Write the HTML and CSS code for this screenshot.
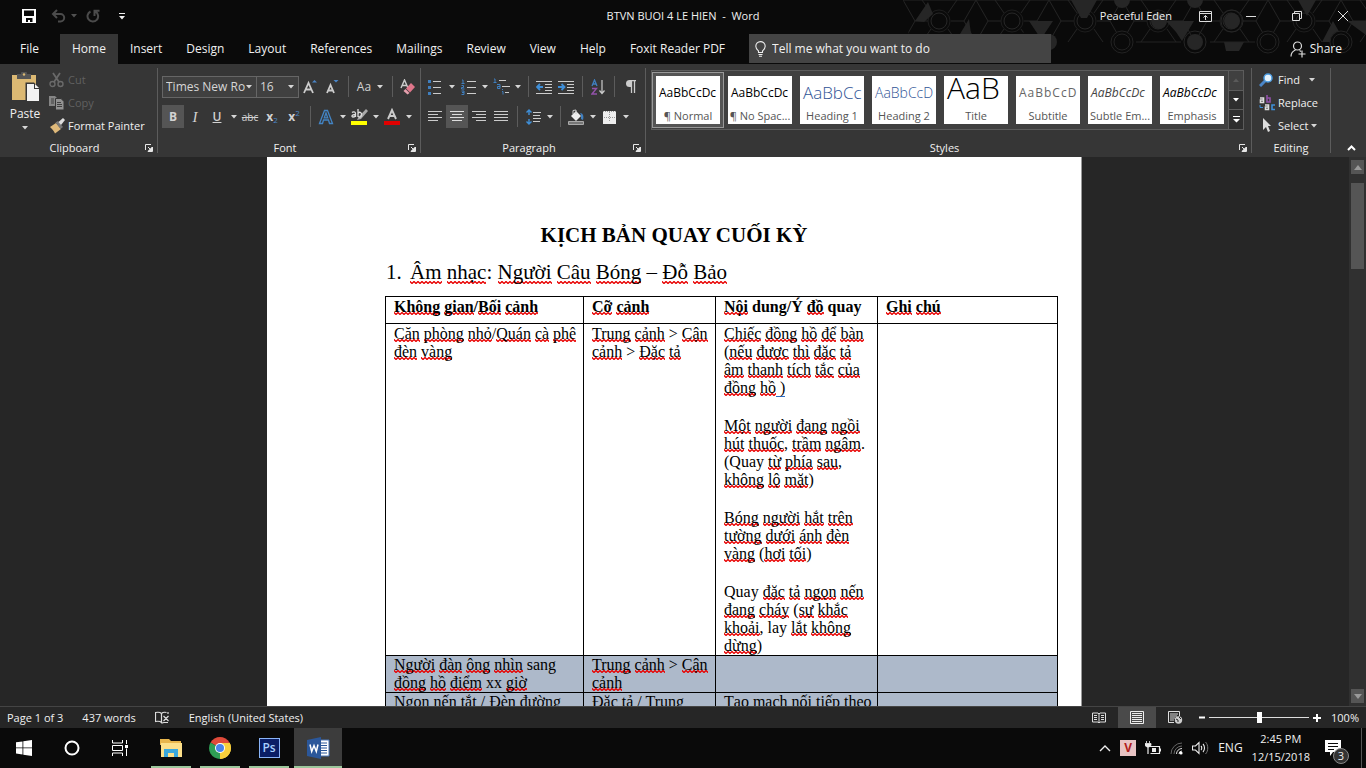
FILE: index.html
```html
<!DOCTYPE html>
<html lang="en">
<head>
<meta charset="utf-8">
<title>BTVN BUOI 4 LE HIEN - Word</title>
<link rel="stylesheet" href="styles.css">
</head>
<body>
<svg class="defs" aria-hidden="true">
  <symbol id="caret" viewBox="0 0 6 4"><path d="M0 0h6L3 3.500z" fill="#d6d6d6"/></symbol>
  <symbol id="launch" viewBox="0 0 8 8"><path d="M.5 6V.5H6M3 3l3 3M7.500 3v4.500H3z" fill="none" stroke="#e6e6e6"/><path d="M7 3v4H3z" fill="#e6e6e6"/></symbol>
</svg>

<header class="top">
  <svg class="pattern" width="466" height="64" viewBox="0 0 466 64" aria-hidden="true">
    <defs>
      <pattern id="hex" width="73" height="42" patternUnits="userSpaceOnUse" x="3" y="0">
        <path d="M0 0L12 21L0 42M12 21H25M48 21H61M61 21L73 0M61 21L73 42M28 13L19 0M45 13L54 0M28 29L19 42M45 29L54 42M0 0h73" fill="none" stroke="#232323"/>
        <circle cx="36" cy="21" r="8" fill="none" stroke="#262626"/>
        <circle cx="36" cy="21" r="11" fill="none" stroke="#1c1c1c"/>
      </pattern>
    </defs>
    <path d="M3 0H466V42H160L140 21L110 42H10z" fill="url(#hex)"/>
    <g fill="#262626">
      <path d="M15 21L28 2l5 12-9 8zM60 34l9-15 2 15zM129 21h24l-12 18zM171 0h26l-10 18h-6zM266 21h28l-12 20-6-9zM398 0h18l-9 16zM422 42l11-21 12 21zM324 42h20l-5 9h-13zM447 21h19v14z"/>
      <circle cx="332" cy="21" r="8"/><circle cx="295" cy="42" r="8"/><circle cx="149" cy="42" r="8"/><circle cx="222" cy="0" r="8"/><circle cx="295" cy="0" r="8"/><circle cx="259" cy="21" r="8"/>
    </g>
    <g fill="#0a0a0a" stroke="#232323"><circle cx="222" cy="42" r="11"/><circle cx="222" cy="42" r="8"/><circle cx="368" cy="42" r="11"/><circle cx="368" cy="42" r="8"/><circle cx="441" cy="42" r="11"/><circle cx="441" cy="42" r="8"/></g>
    <path d="M236 42h45M310 42h45" stroke="#232323"/>
    <circle cx="332" cy="21" r="11" fill="none" stroke="#262626"/><circle cx="295" cy="42" r="11" fill="none" stroke="#262626"/>
  </svg>
  <div class="titlebar">
    <div class="qat">
      <button aria-label="Save"><svg width="14" height="14" viewBox="0 0 14 14"><path d="M0 0h14v14H0z" fill="#fff"/><path d="M2 1.500h10v5.500H2zM4 9h6.500v4H8v-2H6v2H4z" fill="#0a0a0a"/></svg></button>
      <button aria-label="Undo"><svg width="15" height="14" viewBox="0 0 15 14"><path d="M2 5h7.500a3.700 3.700 0 010 7.400H7M6 1L2 5l4 4" fill="none" stroke="#4b4b4b" stroke-width="2"/></svg></button>
      <button class="slim" aria-label="Undo list"><svg width="6" height="4" opacity=".35"><use href="#caret"/></svg></button>
      <button aria-label="Repeat"><svg width="14" height="14" viewBox="0 0 14 14"><path d="M4.500 2.500A5.300 5.300 0 1 0 9.500 2.700M8.500 7V1.800H13.500" fill="none" stroke="#4b4b4b" stroke-width="2"/></svg></button>
      <button class="more" aria-label="Customize Quick Access Toolbar"><svg width="6" height="7" viewBox="0 0 6 7"><path d="M0 0h6v1H0zM0 3h6L3 6.500z" fill="#eee"/></svg></button>
    </div>
    <h1 class="doc-name">BTVN BUOI 4 LE HIEN&nbsp; -&nbsp; Word</h1>
    <div class="window-tools">
      <span class="user">Peaceful Eden</span>
      <button aria-label="Ribbon display options"><svg width="13" height="11" viewBox="0 0 13 11"><path d="M.5.500h12v10H.500zM.500 2.500h12M6.500 9V4.500M4.500 6.500l2-2 2 2" fill="none" stroke="#ddd"/></svg></button>
      <button aria-label="Minimize"><svg width="10" height="10"><path d="M0 5.500h10" stroke="#ddd"/></svg></button>
      <button aria-label="Restore"><svg width="10" height="10" viewBox="0 0 10 10"><path d="M.5 2.500h7v7h-7zM2.500 2.500v-2h7v7h-2" fill="none" stroke="#ddd"/></svg></button>
      <button aria-label="Close"><svg width="10" height="10"><path d="M0 0l10 10M10 0L0 10" stroke="#ddd"/></svg></button>
    </div>
  </div>
  <nav class="tabs">
    <button class="file">File</button>
    <button class="on">Home</button>
    <button>Insert</button>
    <button>Design</button>
    <button>Layout</button>
    <button>References</button>
    <button>Mailings</button>
    <button>Review</button>
    <button>View</button>
    <button>Help</button>
    <button>Foxit Reader PDF</button>
    <label class="tell">
      <svg width="11" height="16" viewBox="0 0 11 16"><path d="M3.500 11.500V10C2 8.500.8 7.500.8 5.300a4.700 4.700 0 019.400 0C10.200 7.500 9 8.500 7.500 10v1.500zM3.500 13.500h4M4 15.300h3" fill="none" stroke="#eee" stroke-width="1.100"/></svg>
      <input type="text" placeholder="Tell me what you want to do" aria-label="Tell me what you want to do">
    </label>
    <button class="share"><svg width="16" height="17" viewBox="0 0 16 17"><circle cx="7.500" cy="5" r="4" fill="none" stroke="#ddd" stroke-width="1.200"/><path d="M1 15.500c0-3.500 2-5.500 4.500-6.500M9.500 9.500l1.500 1M12 9.500v7M8.500 13h7" fill="none" stroke="#ddd" stroke-width="1.200"/></svg>Share</button>
  </nav>
</header>

<section class="ribbon">
  <div class="group clipboard">
    <div class="tools">
      <button class="paste">
        <svg width="29" height="30" viewBox="0 0 29 30"><path d="M1 3h24v25H1z" fill="#dcb973"/><path d="M6 2h4a3 3 0 016 0h4v5H6z" fill="#555"/><circle cx="13" cy="2.500" r="1.200" fill="#dcb973"/><path d="M14.500 10.500H23l6 6V30H14.500z" fill="#363636"/><path d="M16 12h7v5h5v12H16z" fill="#f2f2f2"/><path d="M24 12l4 4h-4z" fill="#f2f2f2"/></svg>
        <span>Paste</span>
        <svg width="6" height="4"><use href="#caret"/></svg>
      </button>
      <div class="clip-list">
        <button class="off"><svg width="16" height="16" viewBox="0 0 16 16"><path d="M4 1l6 9M11 1L5 10" stroke="#777" stroke-width="1.800"/><g fill="none" stroke="#777" stroke-width="1.400"><circle cx="3.500" cy="12" r="2.500"/><circle cx="11.500" cy="12" r="2.500"/></g></svg>Cut</button>
        <button class="off"><svg width="16" height="16" viewBox="0 0 16 16"><path d="M0 1h6l2 2v8H0z" fill="#999"/><path d="M6.500 3.500h5.500l3 3V15H6.500z" fill="#aaa" stroke="#363636"/><path d="M2 4h3M2 6h3M2 8h3M8 7.500h4M8 9.500h5M8 11.500h5" stroke="#444"/></svg>Copy</button>
        <button><svg width="16" height="16" viewBox="0 0 16 16"><path d="M1 9l6-4 5 6-6 4.500C5 13 3 11 1 9z" fill="#dfb97a"/><path d="M6.500 4.500L9 3l5 6-2.500 2z" fill="#777"/><path d="M9.500 4L14 0l2 2-4 5z" fill="#ddd"/></svg>Format Painter</button>
      </div>
    </div>
    <footer><span>Clipboard</span><button aria-label="Clipboard options"><svg width="8" height="8"><use href="#launch"/></svg></button></footer>
  </div>

  <div class="group font">
    <div class="tools rows">
      <div class="row">
        <select class="face" aria-label="Font"><option>Times New Ro</option></select>
        <select class="size" aria-label="Font size"><option>16</option></select>
        <button class="ic" aria-label="Grow font"><svg width="14" height="16" viewBox="0 0 14 16"><path d="M1 14L5.500 4 10 14M2.500 10.500h6" fill="none" stroke="#ccc" stroke-width="1.800"/><path d="M9 3.500h5L11.500 1z" fill="#4a86c8"/></svg></button>
        <button class="ic" aria-label="Shrink font"><svg width="14" height="16" viewBox="0 0 14 16"><path d="M2 14l3.500-8L9 14M3.200 11.500h4.500" fill="none" stroke="#ccc" stroke-width="1.800"/><path d="M8.500 1h5L11 3.500z" fill="#4a86c8"/></svg></button>
        <i class="sep"></i>
        <button class="case">Aa<svg width="6" height="4"><use href="#caret"/></svg></button>
        <i class="sep"></i>
        <button class="ic" aria-label="Clear formatting"><svg width="16" height="16" viewBox="0 0 16 16"><path d="M1 9L4.500 1 8 9M2 6.500h5" fill="none" stroke="#ccc" stroke-width="1.400"/><path d="M11 4l4 4-5 5.500-4-4z" fill="#e0768b"/><path d="M5.500 10l4 4-2 1.500L3.500 12z" fill="#e6a0ae"/></svg></button>
      </div>
      <div class="row">
        <button class="ic on"><b>B</b></button>
        <button class="ic serif"><em>I</em></button>
        <button class="ic und">U</button>
        <button class="dd" aria-label="Underline style"><svg width="6" height="4"><use href="#caret"/></svg></button>
        <button class="ic strike">abc</button>
        <button class="ic sub"><b>x</b><small>2</small></button>
        <button class="ic sup"><b>x</b><small>2</small></button>
        <i class="sep"></i>
        <button class="ic" aria-label="Text effects"><svg width="16" height="16" viewBox="0 0 16 16"><path d="M1.500 14.500L6.500 1.500h3l5 13h-3L10.500 11h-5l-1 3.500zM6.300 8.800h3.400L8 4z" fill="none" stroke="#4384c4" stroke-width="1.300"/></svg></button>
        <button class="dd" aria-label="Effects list"><svg width="6" height="4"><use href="#caret"/></svg></button>
        <button class="ic" aria-label="Highlight colour"><svg width="17" height="17" viewBox="0 0 17 17"><path d="M0 13h16v4H0z" fill="#ff0"/><path d="M15 1l2 2-7 8-4 1 1.500-3z" fill="#aaa"/><path d="M1 4.500c1-1 3.500-1 3.500 1V9M4.500 6.500C0 6.500.5 9 2 9s2.500-1 2.500-2M7 1v8M7 5.500c1-2 4-1.500 3.500 1.500S8 9.500 7 8" fill="none" stroke="#ddd" stroke-width="1.300"/></svg></button>
        <button class="dd" aria-label="Highlight list"><svg width="6" height="4"><use href="#caret"/></svg></button>
        <button class="ic" aria-label="Font colour"><svg width="16" height="17" viewBox="0 0 16 17"><path d="M0 13h16v4H0z" fill="#e00000"/><path d="M4 11L8 2l4 9M5.200 8h5.500" fill="none" stroke="#ccc" stroke-width="1.900"/></svg></button>
        <button class="dd" aria-label="Font colour list"><svg width="6" height="4"><use href="#caret"/></svg></button>
      </div>
    </div>
    <footer><span>Font</span><button aria-label="Font options"><svg width="8" height="8"><use href="#launch"/></svg></button></footer>
  </div>

  <div class="group para">
    <div class="tools rows">
      <div class="row">
        <button class="ic" aria-label="Bullets"><svg width="14" height="16" viewBox="0 0 14 16"><path d="M5 2.500h8M5 8.500h8M5 14.500h8" stroke="#ccc"/><path d="M0 1h3v3H0zM0 7h3v3H0zM0 13h3v3H0z" fill="#3f7fbf"/></svg></button>
        <button class="dd" aria-label="Bullet list"><svg width="6" height="4"><use href="#caret"/></svg></button>
        <button class="ic" aria-label="Numbering"><svg width="15" height="16" viewBox="0 0 15 16"><path d="M6 2.500h9M6 8.500h9M6 14.500h9" stroke="#ccc"/><path d="M1 1h1v3M.5 4.500h3M.5 6.500h2v2h-2v1.500h3M.5 12h2.500v3.500H.5M1 13.500h2" fill="none" stroke="#3f7fbf"/></svg></button>
        <button class="dd" aria-label="Numbering list"><svg width="6" height="4"><use href="#caret"/></svg></button>
        <button class="ic" aria-label="Multilevel list"><svg width="17" height="17" viewBox="0 0 17 17"><path d="M6 2.500h7M9 8.500h8M12 14.500h4" stroke="#ccc"/><path d="M1 1h1v3M.5 4.500h3M4 6.500h3v4H4.500v-2H7M9.500 11v1M9 13.500h1v3" fill="none" stroke="#3f7fbf"/></svg></button>
        <button class="dd" aria-label="Multilevel styles"><svg width="6" height="4"><use href="#caret"/></svg></button>
        <i class="sep"></i>
        <button class="ic" aria-label="Decrease indent"><svg width="16" height="14" viewBox="0 0 16 14"><path d="M0 1.500h16M9 4.500h7M9 7.500h7M9 10.500h7M0 13.500h16" stroke="#ccc"/><path d="M7 7H1M4 4L1 7l3 3" fill="none" stroke="#3f8fd8" stroke-width="1.800"/></svg></button>
        <button class="ic" aria-label="Increase indent"><svg width="16" height="14" viewBox="0 0 16 14"><path d="M0 1.500h16M9 4.500h7M9 7.500h7M9 10.500h7M0 13.500h16" stroke="#ccc"/><path d="M0 7h6M3.500 4l3 3-3 3" fill="none" stroke="#3f8fd8" stroke-width="1.800"/></svg></button>
        <i class="sep"></i>
        <button class="ic" aria-label="Sort"><svg width="14" height="16" viewBox="0 0 14 16"><path d="M1 7l2.500-6L6 7M2 5h3" fill="none" stroke="#3f7fbf" stroke-width="1.300"/><path d="M1 9.500h4.500L1 15h5" fill="none" stroke="#9152a8" stroke-width="1.400"/><path d="M11 1v13M8.500 11.500L11 14.500l2.500-3" fill="none" stroke="#ccc" stroke-width="1.200"/></svg></button>
        <i class="sep"></i>
        <button class="ic" aria-label="Show paragraph marks"><svg width="11" height="14" viewBox="0 0 11 14"><path d="M11 .5H5M6.500 1v12M9.500 1v12" stroke="#ccc" stroke-width="1.300"/><path d="M6 0H4.500a3.500 3.500 0 000 7H6z" fill="#ccc"/></svg></button>
      </div>
      <div class="row">
        <button class="ic" aria-label="Align left"><svg width="14" height="11"><path d="M0 .5h14M0 3.500h10M0 6.500h14M0 9.500h10" stroke="#ccc"/></svg></button>
        <button class="ic on" aria-label="Centre"><svg width="14" height="11"><path d="M0 .5h14M2 3.500h10M0 6.500h14M2 9.500h10" stroke="#ddd"/></svg></button>
        <button class="ic" aria-label="Align right"><svg width="14" height="11"><path d="M0 .5h14M4 3.500h10M0 6.500h14M4 9.500h10" stroke="#ccc"/></svg></button>
        <button class="ic" aria-label="Justify"><svg width="14" height="11"><path d="M0 .5h14M0 3.500h14M0 6.500h14M0 9.500h14" stroke="#ccc"/></svg></button>
        <i class="sep"></i>
        <button class="ic" aria-label="Line spacing"><svg width="15" height="16" viewBox="0 0 15 16"><path d="M7 3.500h8M7 6.500h7M7 9.500h8M7 12.500h7" stroke="#ccc"/><path d="M3 1v5M.5 3.500L3 1l2.500 2.500M3 10v5M.5 12.500L3 15l2.500-2.500" fill="none" stroke="#3f8fd8" stroke-width="1.400"/></svg></button>
        <button class="dd" aria-label="Spacing list"><svg width="6" height="4"><use href="#caret"/></svg></button>
        <i class="sep"></i>
        <button class="ic" aria-label="Shading"><svg width="17" height="16" viewBox="0 0 17 16"><path d="M.5 12.500h15v3H.5z" fill="#777" stroke="#aaa"/><path d="M8 2l5 5-5 5-5-5z" fill="#eee"/><path d="M5 5V1.500L8 1v4" fill="none" stroke="#ccc"/><path d="M12 4c3 0 4 3 3 7l-2-1V6z" fill="#3f7fbf"/></svg></button>
        <button class="dd" aria-label="Shading list"><svg width="6" height="4"><use href="#caret"/></svg></button>
        <button class="ic" aria-label="Borders"><svg width="13" height="14" viewBox="0 0 13 14"><path d="M0 1h13v13H0z" fill="#eee"/><path d="M0 1.500h13M6.500 2v10M1 7.500h12" stroke="#999" stroke-dasharray="1 1"/></svg></button>
        <button class="dd" aria-label="Border list"><svg width="6" height="4"><use href="#caret"/></svg></button>
      </div>
    </div>
    <footer><span>Paragraph</span><button aria-label="Paragraph options"><svg width="8" height="8"><use href="#launch"/></svg></button></footer>
  </div>

  <div class="group styles">
    <div class="tools">
      <div class="gallery">
        <button class="tile on"><span class="demo">AaBbCcDc</span><span class="cap">¶ Normal</span></button>
        <button class="tile"><span class="demo">AaBbCcDc</span><span class="cap">¶ No Spac...</span></button>
        <button class="tile"><span class="demo h1s">AaBbCc</span><span class="cap">Heading 1</span></button>
        <button class="tile"><span class="demo h2s">AaBbCcD</span><span class="cap">Heading 2</span></button>
        <button class="tile"><span class="demo ttl">AaB</span><span class="cap">Title</span></button>
        <button class="tile"><span class="demo subt">AaBbCcD</span><span class="cap">Subtitle</span></button>
        <button class="tile"><span class="demo subtle">AaBbCcDc</span><span class="cap">Subtle Em...</span></button>
        <button class="tile"><span class="demo emph">AaBbCcDc</span><span class="cap">Emphasis</span></button>
        <div class="gscroll">
          <button aria-label="Previous styles"><svg width="6" height="4" viewBox="0 0 6 4"><path d="M0 4h6L3 .5z" fill="#5a5a5a"/></svg></button>
          <button aria-label="Next styles"><svg width="6" height="4" viewBox="0 0 6 4"><path d="M0 0h6L3 3.500z" fill="#fff"/></svg></button>
          <button aria-label="More styles"><svg width="7" height="7" viewBox="0 0 7 7"><path d="M0 0h7v1H0zM0 3h7L3.500 6.500z" fill="#fff"/></svg></button>
        </div>
      </div>
    </div>
    <footer><span>Styles</span><button aria-label="Styles options"><svg width="8" height="8"><use href="#launch"/></svg></button></footer>
  </div>

  <div class="group editing">
    <div class="tools list">
      <button><svg width="16" height="14" viewBox="0 0 16 14"><path d="M6 8l-5 5" stroke="#4a86c8" stroke-width="3"/><circle cx="9" cy="5" r="4" fill="#e4f1fb" stroke="#4a9be0" stroke-width="1.500"/></svg>Find<svg class="gap" width="6" height="4"><use href="#caret"/></svg></button>
      <button><svg width="16" height="16" viewBox="0 0 16 16"><g fill="none" stroke-width="1.600"><path d="M1 3h3.500v4.500H1.500V5H4" stroke="#ddd"/><path d="M8 0v7h3V3H8" stroke="#9152a8"/><path d="M6 10h3.500v4.500H6.500V12H9" stroke="#ddd"/><path d="M16 10h-3v4.500h3" stroke="#3f8fd8"/><path d="M1 10v2.500h3" stroke="#3f8fd8" stroke-width="1"/></g></svg>Replace</button>
      <button><svg width="16" height="15" viewBox="0 0 16 15"><path d="M4 0l8 8H9l2 5-2 1-2-5-3 3z" fill="#ddd"/></svg>Select<svg class="tight" width="6" height="4"><use href="#caret"/></svg></button>
    </div>
    <footer><span>Editing</span></footer>
  </div>
  <button class="collapse" aria-label="Collapse the ribbon"><svg width="9" height="6"><path d="M1 5l3.500-3.500L8 5" fill="none" stroke="#fff" stroke-width="2"/></svg></button>
</section>

<main class="canvas">
  <div class="viewport">
    <article class="page">
      <h2>KỊCH BẢN QUAY CUỐI KỲ</h2>
      <p class="music"><span class="num">1.</span><u>Âm</u> <u>nhạc</u>: <u>Người</u> <u>Câu</u> <u>Bóng</u> – <u>Đỗ</u> <u>Bảo</u></p>
      <table>
        <colgroup><col class="c1"><col class="c2"><col class="c3"><col class="c4"></colgroup>
        <thead>
          <tr><th><u>Không</u> <u>gian</u>/<u>Bối</u> <u>cảnh</u></th><th><u>Cỡ</u> <u>cảnh</u></th><th><u>Nội</u> dung/Ý <u>đồ</u> quay</th><th><u>Ghi</u> <u>chú</u></th></tr>
        </thead>
        <tbody>
          <tr>
            <td><u>Căn</u> <u>phòng</u> <u>nhỏ</u>/<u>Quán</u> <u>cà</u> <u>phê</u><br><u>đèn</u> <u>vàng</u></td>
            <td><u>Trung</u> <u>cảnh</u> &gt; <u>Cận</u><br><u>cảnh</u> &gt; <u>Đặc</u> <u>tả</u></td>
            <td>
              <p><u>Chiếc</u> <u>đồng</u> <u>hồ</u> <u>để</u> <u>bàn</u><br>(<u>nếu</u> <u>được</u> <u>thì</u> <u>đặc</u> <u>tả</u><br><u>âm</u> <u>thanh</u> <u>tích</u> <u>tắc</u> <u>của</u><br><u>đồng</u> <u>hồ</u><span class="gram"> )</span></p>
              <p><u>Một</u> <u>người</u> <u>đang</u> <u>ngồi</u><br><u>hút</u> <u>thuốc</u>, <u>trầm</u> <u>ngâm</u>.<br>(Quay <u>từ</u> <u>phía</u> <u>sau</u>,<br><u>không</u> <u>lộ</u> <u>mặt</u>)</p>
              <p><u>Bóng</u> <u>người</u> <u>hắt</u> <u>trên</u><br><u>tường</u> <u>dưới</u> <u>ánh</u> <u>đèn</u><br><u>vàng</u> (<u>hơi</u> <u>tối</u>)</p>
              <p>Quay <u>đặc</u> <u>tả</u> <u>ngọn</u> <u>nến</u><br><u>đang</u> <u>cháy</u> (<u>sự</u> <u>khắc</u><br><u>khoải</u>, lay <u>lắt</u> <u>không</u><br><u>dừng</u>)</p>
            </td>
            <td></td>
          </tr>
          <tr class="sel">
            <td><u>Người</u> <u>đàn</u> <u>ông</u> <u>nhìn</u> sang<br><u>đồng</u> <u>hồ</u> <u>điểm</u> xx <u>giờ</u></td>
            <td><u>Trung</u> <u>cảnh</u> &gt; <u>Cận</u><br><u>cảnh</u></td>
            <td></td><td></td>
          </tr>
          <tr class="sel">
            <td><u>Ngọn</u> <u>nến</u> <u>tắt</u> / <u>Đèn</u> <u>đường</u></td>
            <td><u>Đặc</u> <u>tả</u> / <u>Trung</u></td>
            <td><u>Tạo</u> <u>mạch</u> <u>nối</u> <u>tiếp</u> <u>theo</u></td>
            <td></td>
          </tr>
        </tbody>
      </table>
    </article>
  </div>
  <div class="vscroll">
    <button aria-label="Scroll up"><svg width="8" height="5"><path d="M0 5h8L4 0z" fill="#999"/></svg></button>
    <div class="rail"><div class="thumb"></div></div>
    <button aria-label="Scroll down"><svg width="8" height="5"><path d="M0 0h8L4 5z" fill="#999"/></svg></button>
  </div>
</main>

<footer class="status">
  <span>Page 1 of 3</span>
  <span>437 words</span>
  <svg width="15" height="13" viewBox="0 0 15 13"><path d="M6.500 11.500C5 10 3 10 .5 10.500V1.500c2.500-.5 4.500-.5 6 1zM6.500 2.500c1.500-1.500 3-1.500 5-1M8.500 5l5 5M13.500 5l-5 5M13 1v2M7 12l2-.5h4" fill="none" stroke="#ddd" stroke-width="1.200"/></svg>
  <span>English (United States)</span>
  <div class="views">
    <button aria-label="Read mode"><svg width="14" height="12" viewBox="0 0 14 12"><path d="M.5 1h5.500l1 1 1-1h5.500v9H8l-1 1-1-1H.500zM7 2v9M2 3.500h3M2 5.500h3M2 7.500h3M9 3.500h3M9 5.500h3M9 7.500h3" fill="none" stroke="#ddd"/></svg></button>
    <button class="on" aria-label="Print layout"><svg width="14" height="13" viewBox="0 0 14 13"><path d="M.5.500h13v12H.500zM2 2.500h10M2 4.500h10M2 6.500h10M2 8.500h10M2 10.500h10" fill="none" stroke="#eee"/></svg></button>
    <button aria-label="Web layout"><svg width="15" height="13" viewBox="0 0 15 13"><path d="M11.500 5V.5H.500v11H6M2 3h8M2 5h7M2 7h5M2 9h4" fill="none" stroke="#ddd"/><circle cx="10.500" cy="9" r="3.700" fill="#ccc"/><path d="M8 8l2 1v2M11 6l2 2" stroke="#262626" fill="none"/></svg></button>
  </div>
  <div class="zoom">
    <button aria-label="Zoom out"><svg width="6" height="7"><path d="M0 3.500h6" stroke="#fff" stroke-width="2"/></svg></button>
    <input type="range" min="10" max="190" value="100" aria-label="Zoom">
    <button aria-label="Zoom in"><svg width="8" height="8"><path d="M0 4h8M4 0v8" stroke="#fff" stroke-width="2"/></svg></button>
    <span>100%</span>
  </div>
</footer>

<footer class="taskbar">
  <button aria-label="Start"><svg width="16" height="16" viewBox="0 0 16 16"><path d="M0 2.300L6.500 1.400v6.100H0zM7.300 1.300L16 0v7.500H7.300zM0 8.300h6.500v6.200L0 13.600zM7.300 8.300H16V16l-8.700-1.300z" fill="#fff"/></svg></button>
  <button aria-label="Cortana"><svg width="16" height="16"><circle cx="8" cy="8" r="6.500" fill="none" stroke="#fff" stroke-width="2"/></svg></button>
  <button aria-label="Task view"><svg width="16" height="16" viewBox="0 0 16 16"><path d="M.5 0v3h10V0M.5 16v-3h10v3M.500 5.500h10v5H.500zM14.500 0v4M14.500 8.500V16" fill="none" stroke="#fff"/><path d="M13 5h3v3h-3z" fill="#fff"/></svg></button>
  <div class="apps">
    <button class="run multi" aria-label="File Explorer"><svg width="22" height="18" viewBox="0 0 22 18"><path d="M0 0h9l2 2h10v4H0z" fill="#e8b64c"/><path d="M1 4h21v14H1z" fill="#fce08a"/><path d="M4 18v-8h14v8h-4v-4H8v4z" fill="#3aa8dc"/></svg></button>
    <button class="run" aria-label="Chrome"><svg width="22" height="22" viewBox="0 0 22 22"><path d="M11 11L1.500 5.500A11 11 0 0120.500 5.500z" fill="#e04a3a"/><path d="M11 11L20.500 5.500A11 11 0 0111 22z" fill="#f8cf3c"/><path d="M11 11v11A11 11 0 011.500 5.500z" fill="#2f9e55"/><path d="M11 6h9.800A11 11 0 0111 22l4.500-8.500z" fill="#f8cf3c"/><circle cx="11" cy="11" r="5" fill="#fff"/><circle cx="11" cy="11" r="4" fill="#4a83ea"/></svg></button>
    <button class="run" aria-label="Photoshop"><span class="ps">Ps</span></button>
    <button class="run active" aria-label="Word"><svg width="23" height="22" viewBox="0 0 23 22"><path d="M12 3h10v16H12z" fill="#fff" stroke="#4a76b8"/><path d="M13 6h7M13 8.500h7M13 11h7M13 13.500h7M13 16h7" stroke="#2b579a"/><path d="M0 3l14-3v22L0 19z" fill="#2b579a"/><path d="M3 7.500l1.700 7L7 8.500l2.300 6 1.700-7" fill="none" stroke="#fff" stroke-width="1.500"/></svg></button>
  </div>
  <div class="tray">
    <svg width="12" height="7"><path d="M1 6l5-5 5 5" fill="none" stroke="#eee" stroke-width="1.400"/></svg>
    <span class="vkey">V</span>
    <svg width="16" height="14" viewBox="0 0 16 14"><path d="M4.500 5.500h10v7h-9M15.500 7.500v3M3 6v7" fill="none" stroke="#eee" stroke-width="1.200"/><path d="M7 7h4v4H7z" fill="#eee"/><path d="M1.500 0v2M4.500 0v2M0 2.500h6v2L4 6H2L0 4.500z" fill="#eee" stroke="#eee" stroke-width=".8"/></svg>
    <svg width="13" height="13" viewBox="0 0 13 13"><path d="M1 12A11 11 0 0112 1M4 12a8 8 0 018-8" fill="none" stroke="#666"/><path d="M6.500 12A5.500 5.500 0 0112 6.500M9 12a3 3 0 013-3" fill="none" stroke="#ddd"/><circle cx="11" cy="11" r="1.600" fill="#fff"/></svg>
    <svg width="17" height="14" viewBox="0 0 17 14"><path d="M.5 5h3L7 1.500v11L3.500 9h-3zM9 5c1 1 1 3 0 4M11 3c2 2 2 6 0 8" fill="none" stroke="#eee" stroke-width="1.100"/><path d="M13.500 1c3 3 3 9 0 12" fill="none" stroke="#777"/></svg>
    <span class="lang">ENG</span>
    <time><span>2:45 PM</span><span>12/15/2018</span></time>
    <button class="notes" aria-label="Notifications"><svg width="16" height="16" viewBox="0 0 16 16"><path d="M0 0h16v12H8l-3 4v-4H0z" fill="#fff"/><path d="M3 3.500h10M3 6.500h10M3 9.500h6" stroke="#0a0a0a"/></svg><span class="badge">3</span></button>
  </div>
</footer>
</body>
</html>
```

FILE: styles.css
```css
* { box-sizing: border-box; }
body {
  margin: 0;
  height: 100vh;
  display: flex;
  flex-direction: column;
  overflow: hidden;
  background: #262626;
  color: #f0f0f0;
  font: 12px/16px "Open Sans", "Noto Sans", sans-serif;
}
button {
  margin: 0;
  padding: 0;
  border: 0;
  background: none;
  color: inherit;
  font: inherit;
  display: flex;
  align-items: center;
  justify-content: center;
  white-space: nowrap;
}
svg { display: block; flex: none; }
.defs { position: absolute; width: 0; height: 0; }

/* Title bar and tabs */
.top { position: relative; flex: none; background: #0a0a0a; }
.pattern { position: absolute; top: 0; right: 0; }
.titlebar, .tabs { position: relative; }
.titlebar {
  display: grid;
  grid-template-columns: 1fr auto 1fr;
  align-items: center;
  height: 34px;
  padding-bottom: 2px;
}
.doc-name { margin: 0; font-size: 11px; font-weight: 400; }
.qat { display: flex; align-items: center; padding-left: 18px; }
.qat button { width: 22px; height: 24px; }
.qat button + button { margin-left: 7px; }
.qat button.slim { width: 10px; margin-left: 0; }
.qat .slim + button { margin-left: 3px; }
.window-tools { display: flex; align-items: center; justify-content: flex-end; }
.window-tools button { width: 46px; height: 32px; }
.user { margin-right: 10px; font-size: 11px; }
.tabs { display: flex; height: 30px; }
.tabs > button { padding: 0 12px; }
.tabs .file { padding: 0 21px 0 20px; }
.tabs .on { background: #363636; }
.tell {
  display: flex;
  align-items: center;
  gap: 6px;
  flex: 0 1 302px;
  height: 29px;
  margin-left: 12px;
  padding-left: 6px;
  background: #444;
}
.tell input {
  flex: 1;
  min-width: 0;
  padding: 0;
  border: 0;
  background: none;
  color: #f0f0f0;
  font: inherit;
}
.tell input::placeholder { color: #f0f0f0; opacity: 1; }
.tabs > .share { margin-left: auto; padding: 0 24px 0 0; gap: 4px; }

/* Ribbon */
.ribbon {
  display: flex;
  flex: none;
  height: 93px;
  padding: 4px 0;
  background: #363636;
}
.group {
  display: flex;
  flex-direction: column;
  border-right: 1px solid #5c5c5c;
}
.tools { display: flex; flex: 1; }
.group footer {
  display: flex;
  align-items: center;
  height: 16px;
  margin-bottom: -3px;
  padding: 0 4px;
  font-size: 11px;
}
.group footer span { flex: 1; text-align: center; }
.clipboard { width: 158px; }
.font { width: 263px; }
.para { width: 225px; }
.styles { flex: 1; }
.editing { width: 79px; }
.tools .paste {
  width: 34px;
  flex-direction: column;
  justify-content: flex-start;
  gap: 4px;
  margin: 4px 0 0 8px;
}
.clip-list { margin-left: 7px; }
.clip-list button, .list button { height: 23px; gap: 3px; font-size: 11px; }
.clip-list .off { color: #606060; }
.clip-list .off svg { opacity: .8; }
.rows { flex-direction: column; padding: 7px 0 0 4px; gap: 7px; }
.para .rows { padding-left: 3px; }
.row { display: flex; align-items: center; height: 23px; }
.row select {
  appearance: none;
  height: 22px;
  padding: 0 0 0 3px;
  border: 1px solid #666;
  border-radius: 0;
  background: #404040 url("data:image/svg+xml,%3Csvg xmlns='http://www.w3.org/2000/svg' width='6' height='4'%3E%3Cpath d='M0 0h6L3 3.500z' fill='%23d6d6d6'/%3E%3C/svg%3E") no-repeat right 4px center;
  color: #d6d6d6;
  font: inherit;
}
.row .face { width: 95px; }
.row .size { width: 43px; margin-left: -1px; }
.ic { width: 22px; height: 23px; color: #d2d2d2; }
.ic.on { background: #555; }
.dd { width: 11px; height: 23px; }
.sep { width: 1px; height: 21px; margin: 0 4px 0 5px; background: #5c5c5c; }
.case { width: 34px; gap: 6px; color: #d2d2d2; }
.serif { font-family: "Liberation Serif", serif; font-size: 15px; }
.und { text-decoration: underline; font-weight: 600; }
.strike { text-decoration: line-through; font-size: 10px; }
.sub small, .sup small { color: #4a86c8; font-size: 8px; }
.sub small { align-self: flex-end; }
.sup small { align-self: flex-start; }

/* Style gallery */
.styles .tools { padding: 2px 7px 0 5px; }
.gallery {
  display: flex;
  flex: 1;
  height: 60px;
  border: 1px solid #5c5c5c;
  background: #404040;
}
.tile {
  flex: 1;
  min-width: 0;
  height: 56px;
  margin-top: 1px;
  padding: 3px;
  border: 1px solid transparent;
  flex-direction: column;
  color: #000;
}
.tile.on { border-color: #999; background: #555; }
.demo, .cap { display: block; width: 100%; background: #fff; }
.demo { flex: 1; height: 32px; padding: 0 3px; line-height: 34px; text-align: left; overflow: hidden; }
.cap { height: 16px; line-height: 16px; color: #555; font-size: 11px; text-align: center; }
.h1s { color: #2f5496; font-size: 17px; font-weight: 300; }
.h2s { color: #2f5496; font-size: 14px; font-weight: 300; }
.ttl { font-size: 30px; font-weight: 300; line-height: 24px; }
.subt { color: #666; letter-spacing: 1px; }
.subtle { color: #444; font-style: italic; }
.emph { font-style: italic; }
.gscroll {
  display: flex;
  flex-direction: column;
  width: 15px;
  border-left: 1px solid #5c5c5c;
}
.gscroll button { flex: 1; background: #2e2e2e; }
.gscroll button:first-child { background: #404040; }
.gscroll button + button { border-top: 1px solid #5c5c5c; }
.list { flex-direction: column; align-items: flex-start; padding-left: 7px; }
.list .gap { margin-left: 6px; }
.collapse { align-self: flex-end; width: 35px; height: 16px; margin-bottom: -3px; padding-left: 5px; }

/* Document */
.canvas { display: flex; flex: 1; min-height: 0; }
.viewport { flex: 1; overflow: hidden; }
.page {
  max-width: 815px;
  min-height: 100%;
  margin: 0 auto;
  padding: 66px 119px 0;
  border-right: 1px solid #999;
  background: #fff;
  color: #000;
  font: 16px/18px "Liberation Serif", "Times New Roman", serif;
}
.page h2 { margin: 0; font-size: 21px; line-height: 24px; text-align: center; }
.music { display: flow-root; margin: 13px 0 12px; font-size: 21px; line-height: 24px; }
.num { display: inline-block; width: 24px; }
.page table {
  width: 673px;
  margin-left: -1px;
  table-layout: fixed;
  border-collapse: collapse;
}
.c1 { width: 198px; }
.c2 { width: 132px; }
.c3 { width: 162px; }
.c4 { width: 180px; }
.page th, .page td {
  padding: 1px 0 0 8px;
  border: 1px solid #000;
  text-align: left;
  vertical-align: top;
  white-space: nowrap;
}
.page th { height: 27px; }
.page td p { margin: 0 0 20px; }
.page td p:last-child { margin: 0; }
.page tr.sel td { padding-top: 0; background: #adb9ca; }
.page u, .gram {
  text-decoration: none;
  background: url("data:image/svg+xml,%3Csvg xmlns='http://www.w3.org/2000/svg' width='4' height='3'%3E%3Cpath d='M-1 -.5L0 .5L2 2.500L4 .5L5 -.5' fill='none' stroke='%23e80000' stroke-width='1.300'/%3E%3C/svg%3E") repeat-x left bottom;
}
.page .gram { background: none; border-bottom: 1px solid #2b6cc4; }
.vscroll {
  display: flex;
  flex-direction: column;
  width: 17px;
  padding: 3px 2px;
  background: #303030;
}
.vscroll button { height: 14px; background: #555; }
.rail { flex: 1; padding-top: 9px; }
.thumb { height: 17%; background: #555; }

/* Status bar */
.status {
  display: flex;
  align-items: center;
  flex: none;
  height: 22px;
  padding: 0 7px;
  gap: 19px;
  border-top: 1px solid #444;
  background: #262626;
  font-size: 11px;
}
.views { display: flex; margin-left: auto; }
.views button { width: 38px; height: 21px; }
.views .on { background: #4a4a4a; }
.zoom { display: flex; align-items: center; gap: 4px; margin-left: -14px; }
.zoom span { margin-left: 6px; }
.zoom input {
  appearance: none;
  width: 100px;
  height: 12px;
  margin: 0;
  background: linear-gradient(#ddd, #ddd) center / 100% 1px no-repeat;
}
.zoom input::-webkit-slider-thumb {
  appearance: none;
  width: 5px;
  height: 11px;
  background: #fff;
}

/* Taskbar */
.taskbar {
  display: flex;
  align-items: stretch;
  flex: none;
  height: 40px;
  background: #0a0a0a;
}
.taskbar > button, .apps button { width: 48px; }
.apps { display: flex; gap: 1px; margin-left: 3px; }
.apps button {
  background: linear-gradient(#9cc79c, #9cc79c) center bottom / 40px 2px no-repeat;
}
.apps .active { background-color: #3c3c3c; background-size: 48px 2px; }
.ps {
  width: 21px;
  height: 20px;
  border: 1px solid #8ab4f8;
  background: #0a1e66;
  color: #a8d0ff;
  font-weight: 600;
  line-height: 17px;
}
.tray {
  display: flex;
  align-items: center;
  gap: 9px;
  margin: 0 4px 0 auto;
  padding-right: 12px;
  border-right: 1px solid #555;
}
.vkey {
  width: 16px;
  height: 16px;
  background: #e8c4c4;
  color: #b01c1c;
  font-weight: 700;
  text-align: center;
}
.tray time { display: flex; flex-direction: column; align-items: center; font-size: 11px; line-height: 18px; }
.notes { position: relative; width: 24px; height: 24px; margin-left: 6px; justify-content: flex-start; }
.badge {
  position: absolute;
  right: 0;
  bottom: -4px;
  width: 16px;
  height: 16px;
  border: 1px solid #888;
  border-radius: 50%;
  background: #333;
  font-size: 11px;
  line-height: 14px;
}
```
